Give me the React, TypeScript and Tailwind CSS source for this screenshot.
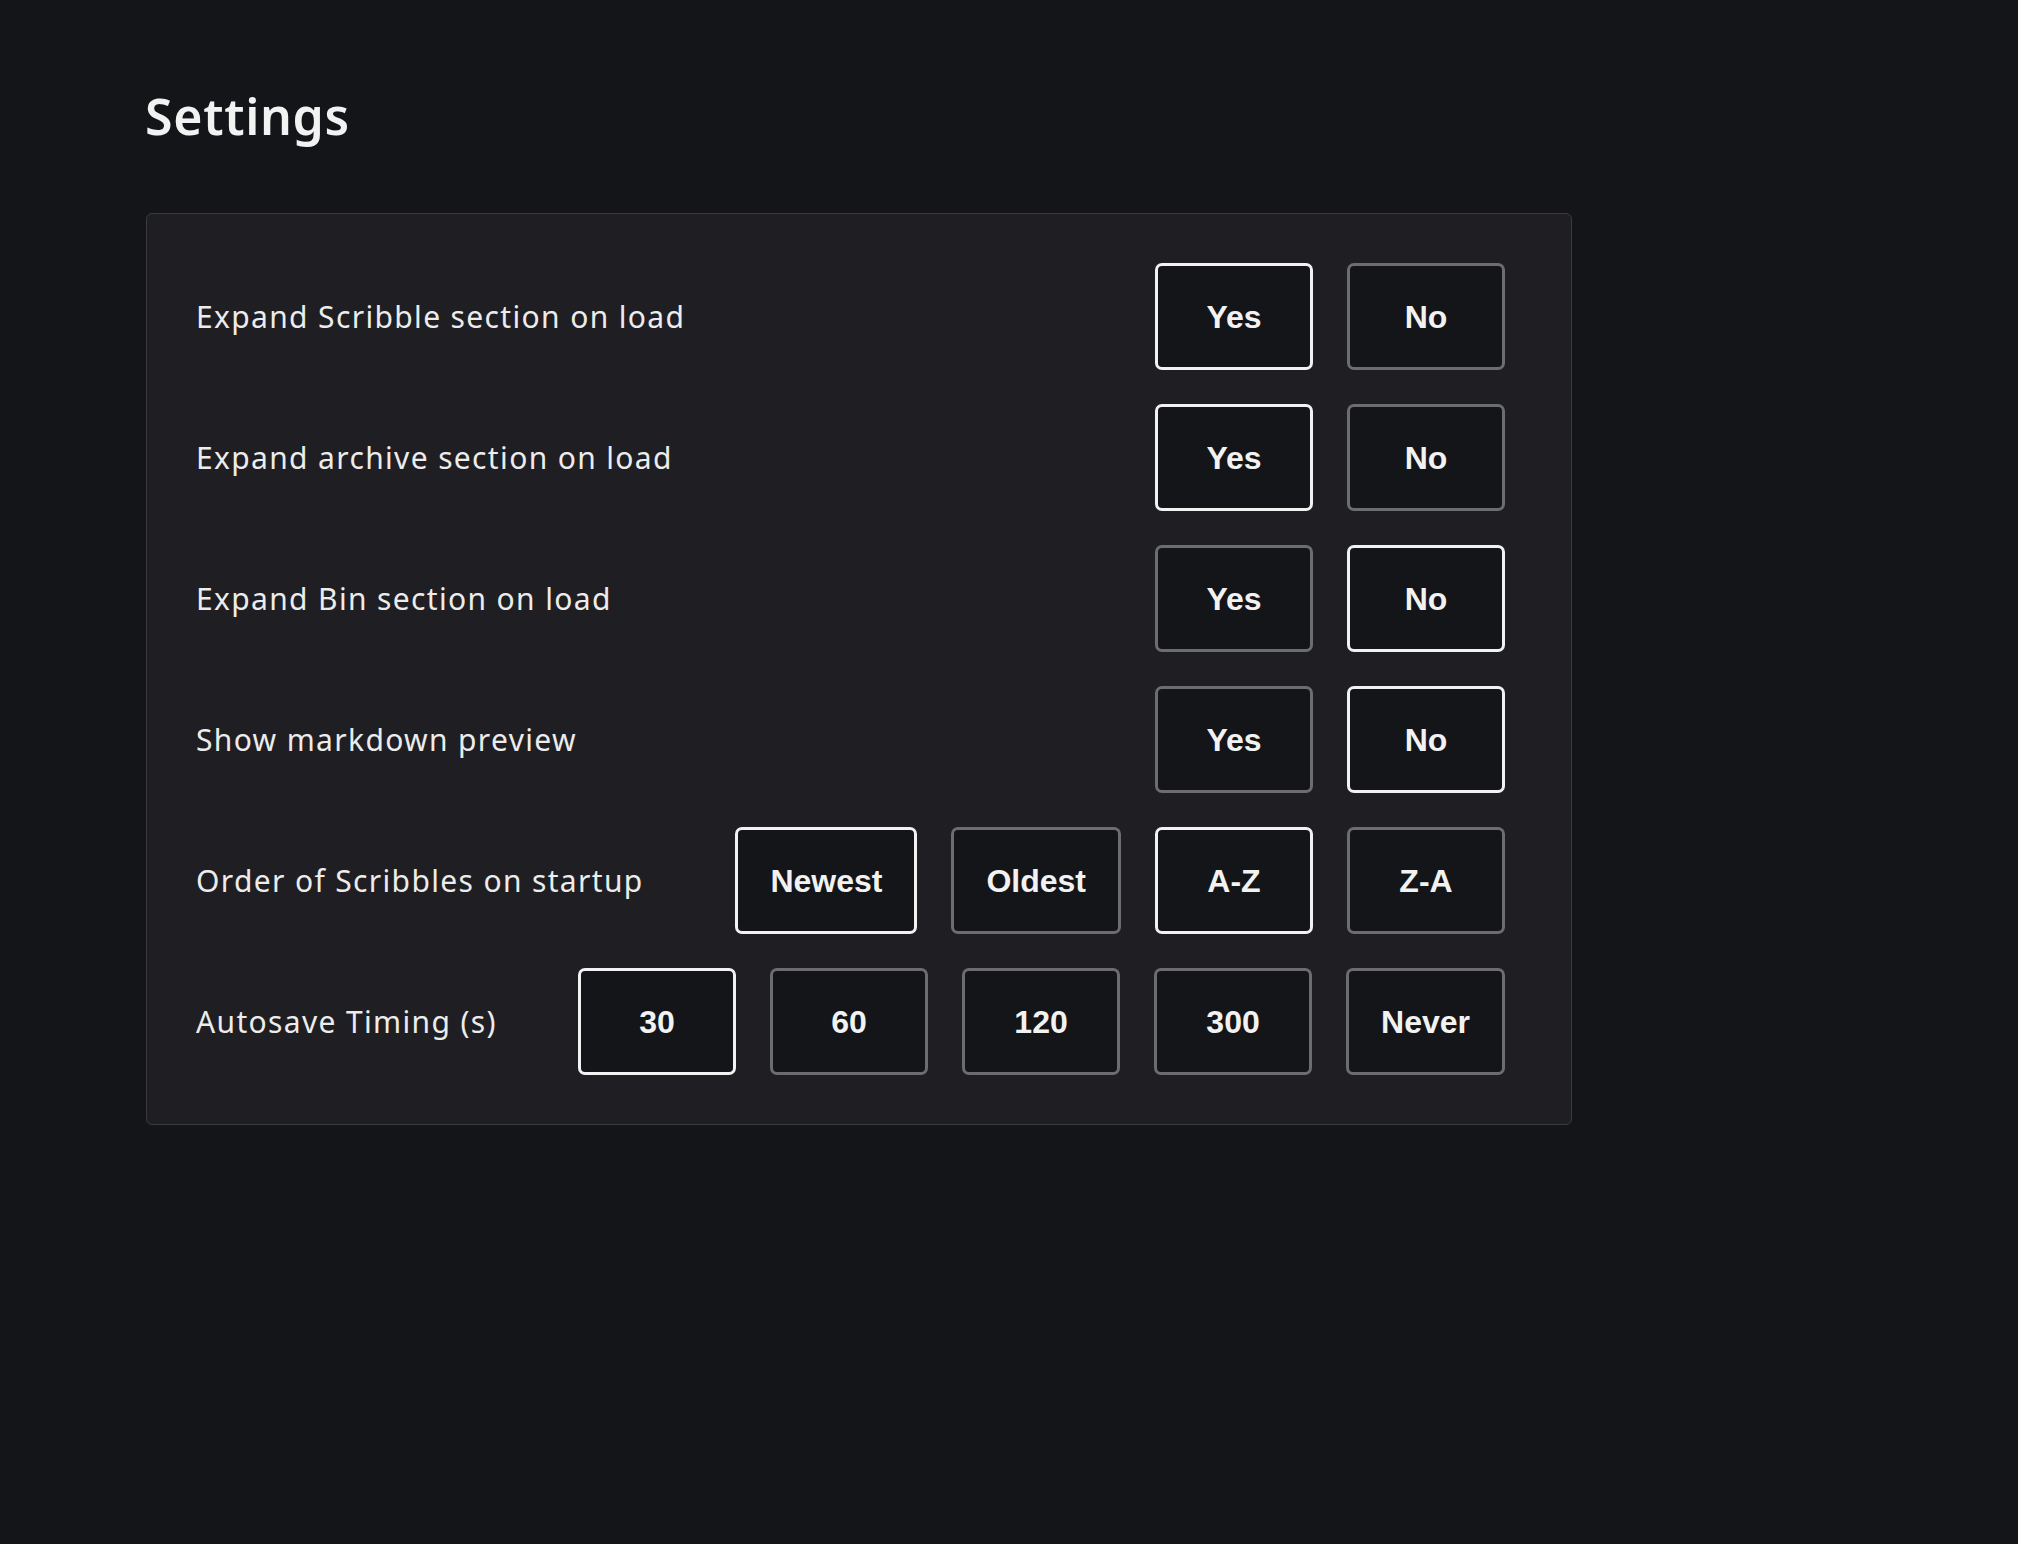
import React from "react";

type Row = { label: string; options: string[]; selected: string[] };

const rows: Row[] = [
  { label: "Expand Scribble section on load", options: ["Yes", "No"], selected: ["Yes"] },
  { label: "Expand archive section on load", options: ["Yes", "No"], selected: ["Yes"] },
  { label: "Expand Bin section on load", options: ["Yes", "No"], selected: ["No"] },
  { label: "Show markdown preview", options: ["Yes", "No"], selected: ["No"] },
  { label: "Order of Scribbles on startup", options: ["Newest", "Oldest", "A-Z", "Z-A"], selected: ["Newest", "A-Z"] },
  { label: "Autosave Timing (s)", options: ["30", "60", "120", "300", "Never"], selected: ["30"] },
];

function OptionButton({ text, active }: { text: string; active: boolean }) {
  return (
    <button
      className={
        "h-[107px] min-w-[158px] px-[32px] rounded-[7px] border-[3px] bg-[#141519] text-[#f2f2f2] text-[32px] font-bold font-['Liberation_Sans',Arial,sans-serif] flex items-center justify-center " +
        (active ? "border-[#f2f2f2]" : "border-[#6c6c71]")
      }
    >
      {text}
    </button>
  );
}

export default function App() {
  return (
    <div className="min-h-[1544px] w-full bg-[#141519] pl-[146px] pt-[91px] font-['Noto_Sans',sans-serif]">
      <h1 className="text-[50px] leading-[50px] font-semibold text-[#f2f2f2] tracking-[0.7px] ml-[-1px]">Settings</h1>
      <div className="mt-[72px] w-[1426px] rounded-[6px] border border-[#3a3a3f] bg-[#1f1e23] pl-[49px] pr-[66px] py-[49px] flex flex-col gap-[34px]">
        {rows.map((r) => (
          <div key={r.label} className="flex items-center justify-between h-[107px]">
            <span className="text-[30px] text-[#ececec] tracking-[1.35px] font-['Noto_Sans',sans-serif]">{r.label}</span>
            <div className="flex gap-[34px]">
              {r.options.map((o) => (
                <OptionButton key={o} text={o} active={r.selected.includes(o)} />
              ))}
            </div>
          </div>
        ))}
      </div>
    </div>
  );
}
